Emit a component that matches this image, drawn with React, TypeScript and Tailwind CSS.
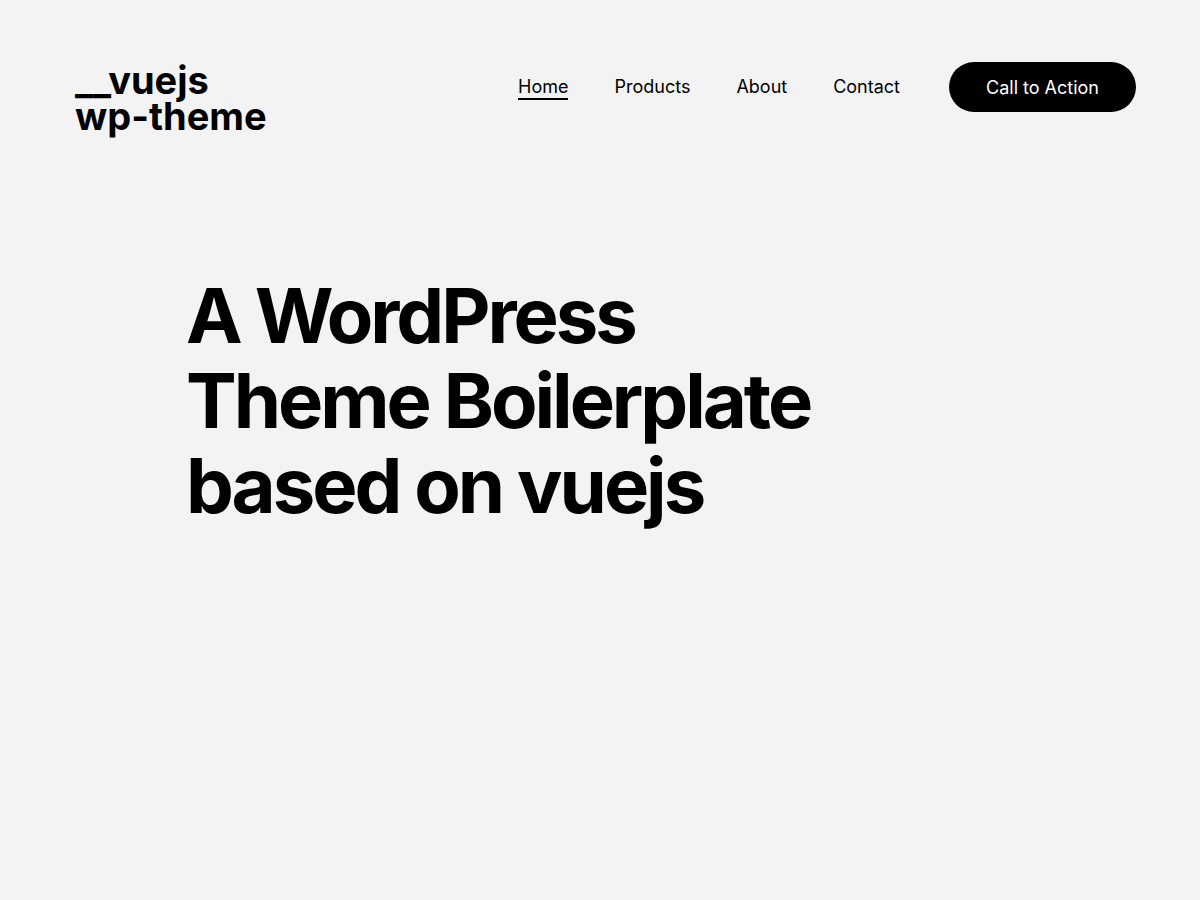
const links = ["Home", "Products", "About", "Contact"];

export default function App() {
  return (
    <div
      className="min-h-[900px] w-full bg-[#f3f3f3] text-black"
      style={{ fontFamily: "Inter, 'Noto Sans', sans-serif" }}
    >
      {/* header */}
      <header className="flex items-start justify-between pl-[75px] pr-[64px] pt-[62px]">
        <a href="#" className="text-[38px] font-bold leading-[36px]">
          __vuejs
          <br />
          wp-theme
        </a>
        <nav className="flex items-center">
          <ul className="flex items-center gap-[46px]">
            {links.map((l, i) => (
              <li key={l}>
                <a
                  href="#"
                  className={
                    i === 0
                      ? "border-b-2 border-black pb-[1px] text-[18px] leading-[24px]"
                      : "text-[18px] leading-[24px]"
                  }
                >
                  {l}
                </a>
              </li>
            ))}
          </ul>
          <button className="ml-[49px] h-[50px] rounded-full bg-black px-[37px] text-[18px] text-white">
            Call to Action
          </button>
        </nav>
      </header>

      {/* hero */}
      <main className="pl-[186px] pt-[139px]">
        <h1 className="text-[76px] font-bold leading-[85px] tracking-[-0.04em]">
          A WordPress
          <br />
          Theme Boilerplate
          <br />
          based on vuejs
        </h1>
      </main>
    </div>
  );
}
